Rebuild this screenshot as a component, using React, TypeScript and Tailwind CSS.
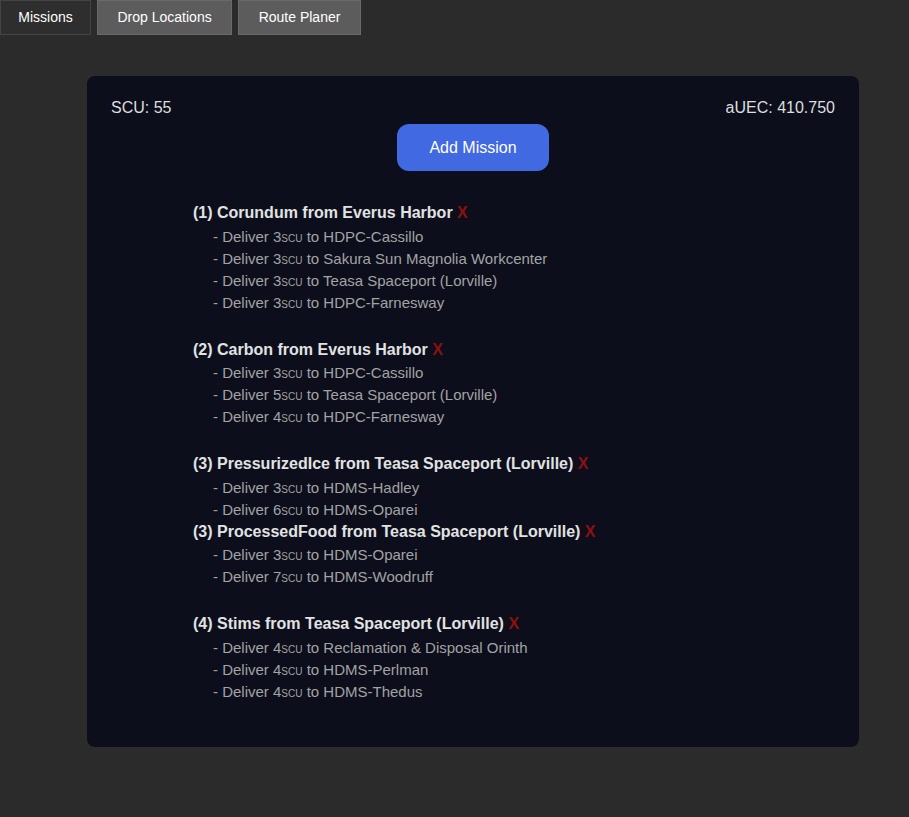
import React from 'react';

type Drop = { scu: number; to: string };
type Mission = { id: number; cargo: string; from: string; drops: Drop[] };

const groups: Mission[][] = [
  [
    {
      id: 1,
      cargo: 'Corundum',
      from: 'Everus Harbor',
      drops: [
        { scu: 3, to: 'HDPC-Cassillo' },
        { scu: 3, to: 'Sakura Sun Magnolia Workcenter' },
        { scu: 3, to: 'Teasa Spaceport (Lorville)' },
        { scu: 3, to: 'HDPC-Farnesway' },
      ],
    },
  ],
  [
    {
      id: 2,
      cargo: 'Carbon',
      from: 'Everus Harbor',
      drops: [
        { scu: 3, to: 'HDPC-Cassillo' },
        { scu: 5, to: 'Teasa Spaceport (Lorville)' },
        { scu: 4, to: 'HDPC-Farnesway' },
      ],
    },
  ],
  [
    {
      id: 3,
      cargo: 'PressurizedIce',
      from: 'Teasa Spaceport (Lorville)',
      drops: [
        { scu: 3, to: 'HDMS-Hadley' },
        { scu: 6, to: 'HDMS-Oparei' },
      ],
    },
    {
      id: 3,
      cargo: 'ProcessedFood',
      from: 'Teasa Spaceport (Lorville)',
      drops: [
        { scu: 3, to: 'HDMS-Oparei' },
        { scu: 7, to: 'HDMS-Woodruff' },
      ],
    },
  ],
  [
    {
      id: 4,
      cargo: 'Stims',
      from: 'Teasa Spaceport (Lorville)',
      drops: [
        { scu: 4, to: 'Reclamation & Disposal Orinth' },
        { scu: 4, to: 'HDMS-Perlman' },
        { scu: 4, to: 'HDMS-Thedus' },
      ],
    },
  ],
];

const tabs = ['Missions', 'Drop Locations', 'Route Planer'];

const App: React.FC = () => {
  return (
    <div
      className="min-h-[817px] bg-[#2b2b2b] text-white"
      style={{ fontFamily: '"Liberation Sans", Arial, sans-serif' }}
    >
      {/* Tabs */}
      <div className="flex gap-[6px]">
        {tabs.map((tab, i) => (
          <button
            key={tab}
            className={`h-[35px] text-[14px] text-white border ${
              i === 0
                ? 'w-[91px] bg-[#2e2e2e] border-[#444444]'
                : 'bg-[#5c5c5c] border-[#6a6a6a] px-[19.5px]'
            }`}
          >
            {tab}
          </button>
        ))}
      </div>

      {/* Card */}
      <div className="ml-[87px] mt-[41px] w-[772px] rounded-[8px] bg-[#0c0e1c] px-[24px] pt-[23px] pb-[19px]">
        <div className="flex justify-between text-[16px] leading-[18px] text-[#dedede]">
          <span>SCU: 55</span>
          <span>aUEC: 410.750</span>
        </div>
        <div className="mt-[7px] flex justify-center">
          <button className="h-[47px] w-[152px] rounded-[12px] bg-[#4169e1] text-[16px] text-white">
            Add Mission
          </button>
        </div>

        <div className="mt-[31px] pl-[82px]">
          {groups.map((group, gi) => (
            <div key={gi} className="mb-[25px]">
              {group.map((m) => (
                <div key={m.cargo}>
                  <div className="mb-[1.5px] text-[16px] leading-[22px] font-bold text-[#e2e2e2]">
                    ({m.id}) {m.cargo} from {m.from}{' '}
                    <span className="text-[#8f1010]">X</span>
                  </div>
                  {m.drops.map((d, di) => (
                    <div key={di} className="pl-[20px] text-[15px] leading-[22px] text-[#a3a3a3]">
                      - Deliver {d.scu}
                      <span className="text-[10px] leading-none">SCU</span> to {d.to}
                    </div>
                  ))}
                </div>
              ))}
            </div>
          ))}
        </div>
      </div>
    </div>
  );
};

export default App;
